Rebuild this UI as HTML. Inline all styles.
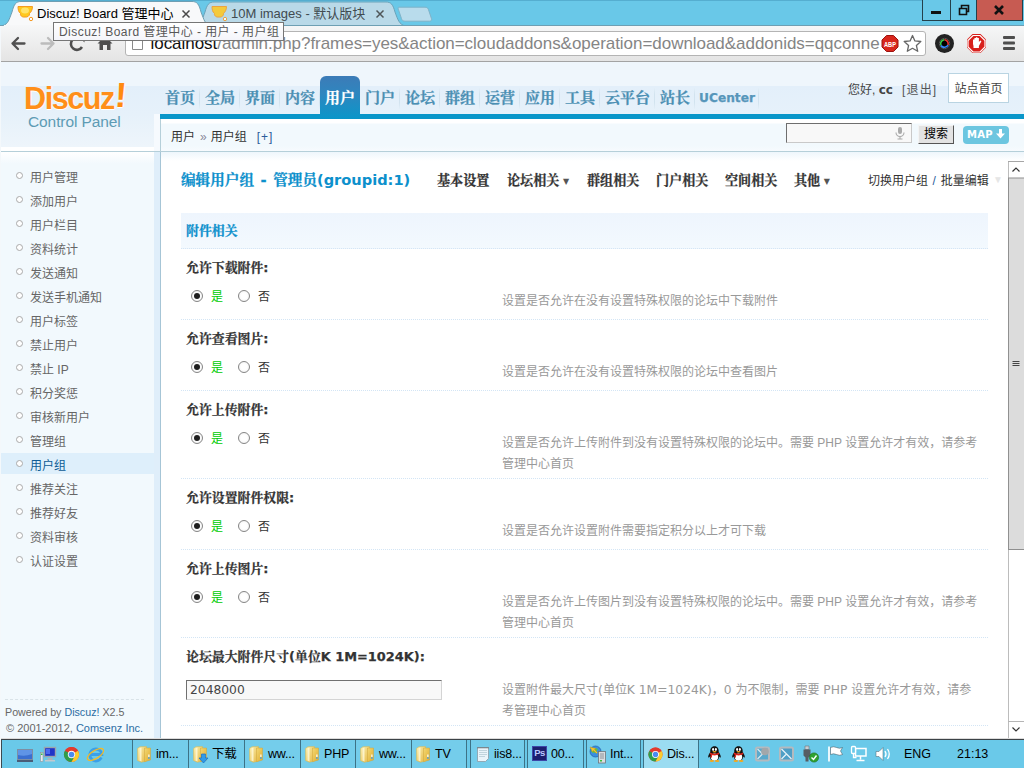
<!DOCTYPE html>
<html lang="zh-CN">
<head>
<meta charset="utf-8">
<title>Discuz! Board 管理中心 - 用户 - 用户组</title>
<style>
html,body{margin:0;padding:0}
body{width:1024px;height:768px;overflow:hidden;position:relative;background:#fff;
 font-family:"DejaVu Sans","Liberation Sans","Noto Sans CJK SC",sans-serif;font-size:12px;color:#555}
*{box-sizing:border-box}
.abs{position:absolute}
.ui{font-family:"Liberation Sans","Noto Sans CJK SC",sans-serif}
.cj{font-family:"Liberation Sans","Noto Sans CJK SC",sans-serif}
.sj{font-family:"DejaVu Sans","Noto Serif CJK SC",serif;-webkit-text-stroke:.25px currentColor}
a{text-decoration:none;color:inherit}

/* ---------- browser chrome ---------- */
#titlebar{left:0;top:0;width:1024px;height:26px;background:#69c8e8}
#toolbar{left:0;top:25px;width:1024px;height:37px;background:linear-gradient(#f6f7f8,#ececec 60%,#e4e4e4);border-bottom:1px solid #a3a3a3}
#urlbar{left:125px;top:31px;width:801px;height:25px;background:#fff;border:1px solid #b4b4b4;border-radius:3px}
#urltext{left:150.500px;top:33px;font-size:17px;line-height:22px;color:#858585;white-space:nowrap;letter-spacing:-.04px}
#urltext b{font-weight:normal;color:#111}
#tooltip{left:53px;top:22px;width:231px;height:19px;background:linear-gradient(#fff,#f4f5fa);border:1px solid #767676;color:#575757;font-size:12px;line-height:18px;padding-left:5px;white-space:nowrap;letter-spacing:.45px}
.tabtitle{top:5px;font-size:13px;line-height:17px;white-space:nowrap}
.wbtn{top:0;height:20px;border:1px solid #2b4f5d;border-top:none}

/* ---------- page ---------- */
#page{left:0;top:62px;width:1024px;height:677px;background:#fff;overflow:hidden}
#hd{left:0;top:0;width:1024px;height:90px;background:linear-gradient(#eff6fc 0,#eff6fc 24px,#e3effa 24px,#e6f1fa 52px,#eef5fb 85px,#fff 85px,#fff 89px,#b5cfd9 89px)}
#navline{left:160px;top:52px;width:864px;height:5px;background:#0996c9}
#crumb{left:160px;top:57px;width:864px;height:33px;background:linear-gradient(#fff 0,#fff 4px,#f2f9fd 5px,#f2f9fd 27px,#f7fbfe 32px);border-bottom:1px solid #b5cfd9;border-left:1px solid #b5cfd9}
.nav a{position:absolute;top:24px;height:28px;line-height:24px;font-size:15px;font-weight:bold;color:#4b8fb3;text-align:center}
.nav a::after{content:"";position:absolute;right:0;top:2px;width:1px;height:21px;background:linear-gradient(#e3eff8,#d2e3ef 30%,#d2e3ef 70%,#e3eff8)}
.nav a.on::after{display:none}
.nav a.on{top:14px;height:43px;line-height:44px;color:#fff;border:none;border-radius:6px 6px 0 0;background:linear-gradient(#3c7bb7,#2f86bf 40%,#0a96c9)}
#side{left:0;top:90px;width:154px;height:587px;background:linear-gradient(#fff,#f2f9fd 12px)}
#sidegap{left:154px;top:90px;width:6px;height:587px;background:#dfeefa}
#mainborder{left:160px;top:90px;width:1px;height:587px;background:#a6c5d6}
.mi{left:0;width:154px;height:21px;font-size:12px;line-height:21px;color:#666}
.mi i{position:absolute;left:16px;top:7px;width:7px;height:7px;border:1px solid #aaa;border-radius:50%;background:#fff}
.mi span{position:absolute;left:30px;top:3px}
.mi.on{background:#deeffb;color:#0d5b95}
#main{left:161px;top:90px;width:863px;height:587px;background:linear-gradient(#eef6fc,#fff 9px)}
h3.t{margin:0;left:20px;top:18px;font-size:14.6px;line-height:20px;color:#0c90cc;font-weight:bold;white-space:nowrap}
.tab{top:21px;font-size:13.100px;line-height:16px;font-weight:bold;color:#333;white-space:nowrap}
#sec{left:20px;top:61px;width:807px;height:36px;background:linear-gradient(#eef5fd,#f3f9fe);border-bottom:1px dotted #d5e6f5;color:#0c90cc;font-weight:bold;font-size:12.900px;line-height:36px;padding-left:5px}
.row{left:20px;width:807px;border-bottom:1px dotted #d3e5f5}
.row .l{position:absolute;left:5px;top:12px;font-weight:bold;color:#333;font-size:12.900px;line-height:14px;white-space:nowrap}
.row .d{position:absolute;left:321px;top:42px;width:486px;color:#999;line-height:21px;font-size:12px}
.rd{position:absolute;top:41px;width:12px;height:12px;border:1px solid #858585;border-radius:50%;background:radial-gradient(#fff 40%,#ececec)}
.rd.c::after{content:"";position:absolute;left:2px;top:2px;width:6px;height:6px;border-radius:50%;background:#1e1e1e}
.rt{position:absolute;top:40px;font-size:12px;line-height:16px;color:#333}
.v{font-family:"DejaVu Sans",sans-serif;font-size:12.300px}
.ar{font-size:8px;position:relative;top:-1.500px;left:3.500px;color:#555;-webkit-text-stroke:0}
#sb{left:1008px;top:99px;width:16px;height:578px;background:#fff;border-left:1px solid #bdbdbd}

/* ---------- taskbar ---------- */
#taskbar{left:0;top:738px;width:1024px;height:30px;background:#6ac9e9;border-top:1px solid #dcdcdc;padding-top:0}
#taskbar::before{content:"";position:absolute;left:0;top:0;width:1024px;height:1px;background:#3c4246}
#taskbar>*{margin-top:1px}
.tb{top:0;height:28px;border-left:1px solid #3d7286;border-right:1px solid #3d7286;font-size:12.5px;letter-spacing:-.2px;line-height:28px;color:#000;white-space:nowrap}
</style>
</head>
<body>

<!-- ================= BROWSER CHROME ================= -->
<div id="titlebar" class="abs"></div>
<div id="toolbar" class="abs"></div>
<svg class="abs" style="left:0;top:0" width="1024" height="26" viewBox="0 0 1024 26">
 <!-- inactive tab -->
 <path d="M195 26 C201 24 202 20 205 12 C207 4.500 209 2 214 2 L386 2 C391 2 393 4.500 395 12 C398 20 399 24 405 26 Z" fill="#b9d9e8" stroke="#6aa3ba" stroke-width="1"/>
 <!-- new tab button -->
 <path transform="translate(0 .7)" d="M399 6.5 L425 6.5 C427 6.5 428 7.5 428.5 9 L431.5 18 C432 19.5 431 20.5 429.5 20.5 L405 20.5 C403 20.5 402 19.5 401.5 18 L398.3 8.5 C398 7.3 398.3 6.5 399 6.5 Z" fill="#b9dcec" stroke="#7fb3c9" stroke-width="1"/>
 <!-- active tab -->
 <path d="M0 26 L0 25.5 L3 25.5 C8 24 9 20 12 12 C14 4 16 1.500 21 1.500 L192 1.500 C197 1.500 199 4 201 12 C204 20 205 24 210 25.5 L1024 25.5 L1024 26 Z" fill="#f8f9fa" stroke="#6f9fb3" stroke-width="1"/>
 <rect x="4" y="25" width="206" height="1" fill="#f6f7f8"/>
 <rect x="0" y="0" width="1024" height="1" fill="#55aed0"/>
 <!-- favicons -->
 <g id="fav1">
  <path d="M18 6.5 L32.5 6.5 C32.5 10 31 12 29.5 13.5 C30 16 27 17.5 25 17 C22 17.5 20 15.5 20.5 13.5 C18.5 12 18 9.5 18 6.5 Z" fill="#ffc81e" stroke="#f59a23" stroke-width="1"/>
  <circle cx="31" cy="19" r="1.7" fill="#fff" stroke="#f59a23" stroke-width="1"/>
  <ellipse cx="25" cy="10.500" rx="4" ry="3" fill="#ffe36a"/>
 </g>
 <g transform="translate(194 0)" opacity=".85">
  <path d="M18 6.5 L32.5 6.5 C32.5 10 31 12 29.5 13.5 C30 16 27 17.5 25 17 C22 17.5 20 15.5 20.5 13.5 C18.5 12 18 9.5 18 6.5 Z" fill="#ffc81e" stroke="#f59a23" stroke-width="1"/>
  <circle cx="31" cy="19" r="1.7" fill="#fff" stroke="#f59a23" stroke-width="1"/>
 </g>
 <!-- tab close crosses -->
 <path d="M182.5 10.500 L189.5 17.500 M189.5 10.500 L182.5 17.500" stroke="#4a4a4a" stroke-width="1.500"/>
 <path d="M376.5 10.500 L383.5 17.500 M383.5 10.500 L376.5 17.500" stroke="#4f5558" stroke-width="1.500"/>
 <!-- window buttons -->
 <rect x="922.5" y="-1" width="28" height="21.500" fill="#69c8e8" stroke="#24404b"/>
 <rect x="950.5" y="-1" width="26" height="21.500" fill="#69c8e8" stroke="#24404b"/>
 <rect x="976.5" y="-1" width="46" height="21.500" fill="#c75b52" stroke="#24404b"/>
 <rect x="931" y="11" width="10" height="3" fill="#111"/>
 <path d="M959.5 8.5 h7 v6 h-7 z M961.5 8 v-2.5 h7 v6 h-2" fill="none" stroke="#111" stroke-width="1.6"/>
 <path d="M995 6 L1003 14 M1003 6 L995 14" stroke="#111" stroke-width="2.6"/>
</svg>
<div class="abs tabtitle ui" style="left:37px;color:#000">Discuz! Board 管理中心</div>
<div class="abs tabtitle ui" style="left:231px;color:#414b50">10M images - 默认版块</div>
<div id="urlbar" class="abs"></div>
<svg class="abs" style="left:0;top:26px" width="1024" height="35" viewBox="0 26 1024 35">
 <!-- back -->
 <path d="M12.500 43.500 L24.500 43.500 M18 38 L12.500 43.500 L18 49" fill="none" stroke="#505050" stroke-width="2.300" stroke-linecap="round" stroke-linejoin="round"/>
 <!-- forward -->
 <path d="M41.500 43.500 L53.500 43.500 M48 38 L53.500 43.500 L48 49" fill="none" stroke="#bcbcbc" stroke-width="2.300" stroke-linecap="round" stroke-linejoin="round"/>
 <!-- reload -->
 <path d="M81.5 40 A6 6 0 1 0 82 47" fill="none" stroke="#4e4e4e" stroke-width="2.6"/>
 <path d="M78 36 L84.5 36 L84.5 42.5 Z" fill="#4e4e4e"/>
 <!-- home -->
 <path d="M97.5 43.5 L105 36 L112.5 43.5 L110.5 43.5 L110.5 50 L107 50 L107 45 L103 45 L103 50 L99.5 50 L99.5 43.5 Z" fill="#4e4e4e"/>
 <!-- page icon -->
 <path d="M132.5 37.5 h7 l3 3 v9 h-10 z" fill="#fff" stroke="#8a8a8a"/>
 <!-- ABP -->
 <path d="M886.5 35.5 h7 l4.5 4.5 v7 l-4.5 4.5 h-7 l-4.5 -4.5 v-7 z" fill="#d8261c" stroke="#9c1410" stroke-width="1"/>
 <text x="890" y="46.5" font-family="Liberation Sans, sans-serif" font-size="7" font-weight="bold" fill="#fff" text-anchor="middle" textLength="12" lengthAdjust="spacingAndGlyphs">ABP</text>
 <!-- star -->
 <path d="M912.5 35.5 l2.4 5.4 5.9 .6 -4.4 4 1.3 5.8 -5.2 -3 -5.2 3 1.3 -5.8 -4.4 -4 5.9 -.6 z" fill="#fff" stroke="#666" stroke-width="1.3" stroke-linejoin="round"/>
 <!-- camera/colour icon -->
 <circle cx="944.5" cy="43.5" r="9.5" fill="#222"/>
 <circle cx="944.5" cy="43.5" r="5.2" fill="#000" stroke="#555" stroke-width="1"/>
 <path d="M941 45.5 A4 4 0 0 1 944.5 39.8" fill="none" stroke="#3bd14c" stroke-width="1.6"/>
 <path d="M944.5 39.8 A4 4 0 0 1 948 45" fill="none" stroke="#e33" stroke-width="1.6"/>
 <path d="M948 45 A4 4 0 0 1 941 45.5" fill="none" stroke="#38f" stroke-width="1.6"/>
 <!-- stop hand -->
 <path d="M972.5 34 h8 l5.5 5.5 v8 l-5.5 5.5 h-8 l-5.500 -5.500 v-8 z" fill="#d8201c" stroke="#fff" stroke-width="0"/>
 <path d="M973 35.500 h7 l5 5 v6.500 l-5 5 h-7 l-5 -5 v-6.500 z" fill="none" stroke="#fff" stroke-width="1.2"/>
 <path d="M973 44 v-4.500 h1.400 v-1.500 h1.500 v-.8 h1.500 v.8 h1.500 v4 l1.300 -1.500 l1.200 .8 l-2.500 4.700 v2 h-5.400 v-2 z" fill="#fff"/>
 <!-- menu -->
 <rect x="1003" y="36" width="12" height="3" rx="1" fill="#4e4e4e"/>
 <rect x="1003" y="41.500" width="12" height="3" rx="1" fill="#4e4e4e"/>
 <rect x="1003" y="47" width="12" height="3" rx="1" fill="#4e4e4e"/>
</svg>
<div id="urltext" class="abs ui"><b>localhost</b>/admin.php?frames=yes&amp;action=cloudaddons&amp;operation=download&amp;addonids=qqconne</div>
<div id="tooltip" class="abs ui">Discuz! Board 管理中心 - 用户 - 用户组</div>

<!-- ================= PAGE ================= -->
<div id="page" class="abs">
 <div id="hd" class="abs"></div>
 <div id="navline" class="abs"></div>
 <div id="crumb" class="abs"></div>
 <div id="logo" class="abs ui" style="left:24px;top:19px;width:110px;height:32px;font-size:30.500px;line-height:32px;font-weight:bold;color:#ff8f1a;letter-spacing:-1.400px;white-space:nowrap;text-shadow:0 1px 0 #fff,1px 0 0 #fff8ee">Discuz<span style="display:inline-block;font-size:35px;position:relative;top:-2px;left:1.500px;transform:skewX(-4deg);color:#ff8a10">!</span></div>
 <div id="logo2" class="abs ui" style="left:28px;top:51px;font-size:15.500px;line-height:18px;color:#5d9bb4;white-space:nowrap;letter-spacing:-.1px">Control Panel</div>
 <div class="nav sj">
  <a style="left:160px;width:40px">首页</a>
  <a style="left:200px;width:40px">全局</a>
  <a style="left:240px;width:40px">界面</a>
  <a style="left:280px;width:40px">内容</a>
  <a class="on" style="left:320px;width:40px">用户</a>
  <a style="left:360px;width:40px">门户</a>
  <a style="left:400px;width:40px">论坛</a>
  <a style="left:440px;width:40px">群组</a>
  <a style="left:480px;width:40px">运营</a>
  <a style="left:520px;width:40px">应用</a>
  <a style="left:560px;width:40px">工具</a>
  <a style="left:600px;width:55px">云平台</a>
  <a style="left:655px;width:40px">站长</a>
  <a style="left:695px;width:64px;font-family:'DejaVu Sans',sans-serif;font-size:12.200px;color:#5696ba">UCenter</a>
 </div>
 <div class="abs cj" style="left:848px;top:20px;font-size:12px;line-height:16px;color:#444;white-space:nowrap">您好, <b style="font-family:'DejaVu Sans',sans-serif;color:#444">cc</b><span style="color:#555;padding-left:9px;letter-spacing:1.200px">[退出]</span></div>
 <div class="abs cj" style="left:948px;top:11px;width:61px;height:30px;background:#fff;border:1px solid #b9d4e2;font-size:12px;line-height:30px;text-align:center;color:#444">站点首页</div>
 <div class="abs cj" style="left:171px;top:67px;font-size:12px;line-height:16px;color:#333;white-space:nowrap">用户<span style="color:#889;padding:0 4px 0 5px">»</span>用户组<span style="color:#2b5c9a;padding-left:10px;letter-spacing:1px">[+]</span></div>
 <div class="abs" style="left:786px;top:61px;width:126px;height:20px;background:#f8f8f8;border:1px solid #c9c9c9;border-top-color:#6e6e6e;border-left-color:#6e6e6e"></div>
 <svg class="abs" style="left:894px;top:64px" width="12" height="14" viewBox="0 0 12 14"><rect x="4" y="1" width="4" height="7" rx="2" fill="#aaa"/><path d="M2 6.500 a4 4 0 0 0 8 0 M6 10.500 v2.500 M3.500 13 h5" fill="none" stroke="#aaa" stroke-width="1.100"/></svg>
 <div class="abs cj" style="left:918px;top:63px;width:36px;height:19px;background:#e3e3e3;border:1px solid #f4f4f4;border-right-color:#555;border-bottom-color:#555;font-size:12px;line-height:17px;text-align:center;color:#000">搜索</div>
 <div class="abs" style="left:963px;top:64px;width:46px;height:18px;background:#6cc6e0;border-radius:4px;color:#fff;font:bold 10px/18px 'DejaVu Sans',sans-serif;text-align:center;letter-spacing:.3px">MAP<svg width="9" height="10" viewBox="0 0 9 10" style="margin-left:3px;vertical-align:-1px"><path d="M3 0 h3 v4.500 h3 l-4.500 5 l-4.500 -5 h3z" fill="#fff"/></svg></div>
 <div class="abs" style="left:154px;top:52px;width:6px;height:37px;background:#f6fafe"></div>
 <div id="side" class="abs cj">
  <div class="mi abs" style="top:13px"><i></i><span>用户管理</span></div>
  <div class="mi abs" style="top:37px"><i></i><span>添加用户</span></div>
  <div class="mi abs" style="top:61px"><i></i><span>用户栏目</span></div>
  <div class="mi abs" style="top:85px"><i></i><span>资料统计</span></div>
  <div class="mi abs" style="top:109px"><i></i><span>发送通知</span></div>
  <div class="mi abs" style="top:133px"><i></i><span>发送手机通知</span></div>
  <div class="mi abs" style="top:157px"><i></i><span>用户标签</span></div>
  <div class="mi abs" style="top:181px"><i></i><span>禁止用户</span></div>
  <div class="mi abs" style="top:205px"><i></i><span>禁止 IP</span></div>
  <div class="mi abs" style="top:229px"><i></i><span>积分奖惩</span></div>
  <div class="mi abs" style="top:253px"><i></i><span>审核新用户</span></div>
  <div class="mi abs" style="top:277px"><i></i><span>管理组</span></div>
  <div class="mi abs on" style="top:301px"><i></i><span>用户组</span></div>
  <div class="mi abs" style="top:325px"><i></i><span>推荐关注</span></div>
  <div class="mi abs" style="top:349px"><i></i><span>推荐好友</span></div>
  <div class="mi abs" style="top:373px"><i></i><span>资料审核</span></div>
  <div class="mi abs" style="top:397px"><i></i><span>认证设置</span></div>
  <div class="abs" style="left:5px;top:547px;width:139px;height:0;border-top:1px dashed #d9e3e8"></div>
  <div class="abs ui" style="left:5px;top:553px;font-size:10.700px;line-height:15px;color:#666;white-space:nowrap">Powered by <span style="color:#2b6ca3">Discuz!</span> X2.5</div>
  <div class="abs ui" style="left:6px;top:569px;font-size:11px;line-height:15px;color:#666;white-space:nowrap">© 2001-2012, <span style="color:#2b6ca3">Comsenz Inc.</span></div>
 </div>
 <div id="sidegap" class="abs"></div>
 <div id="main" class="abs">
  <h3 class="t abs sj">编辑用户组<span style="padding:0 1.500px"> - </span>管理员<span style="font-family:'DejaVu Sans',sans-serif;font-size:14.600px;-webkit-text-stroke:0">(groupid:1)</span></h3>
  <div class="tab abs sj" style="left:276px">基本设置</div>
  <div class="tab abs sj" style="left:346px">论坛相关<span class="ar">▼</span></div>
  <div class="tab abs sj" style="left:426px">群组相关</div>
  <div class="tab abs sj" style="left:495px">门户相关</div>
  <div class="tab abs sj" style="left:564px">空间相关</div>
  <div class="tab abs sj" style="left:633px">其他<span class="ar">▼</span></div>
  <div class="abs cj" style="left:707px;top:21px;font-size:12px;line-height:16px;color:#333;white-space:nowrap">切换用户组<span style="color:#2b5c9a;padding:0 5px 0 4.500px">/</span>批量编辑<span style="color:#e6e6e6;font-size:10px;position:relative;top:-2px;left:4px">▼</span></div>
  <div id="sec" class="abs sj">附件相关</div>
  <div class="row abs" style="top:97px;height:71px"><span class="l sj">允许下载附件:</span><i class="rd c" style="left:10px"></i><span class="rt" style="left:30px;color:#0c0">是</span><i class="rd" style="left:57px"></i><span class="rt" style="left:77px">否</span><span class="d cj">设置是否允许在没有设置特殊权限的论坛中下载附件</span></div>
  <div class="row abs" style="top:168px;height:71px"><span class="l sj">允许查看图片:</span><i class="rd c" style="left:10px"></i><span class="rt" style="left:30px;color:#0c0">是</span><i class="rd" style="left:57px"></i><span class="rt" style="left:77px">否</span><span class="d cj">设置是否允许在没有设置特殊权限的论坛中查看图片</span></div>
  <div class="row abs" style="top:239px;height:88px"><span class="l sj">允许上传附件:</span><i class="rd c" style="left:10px"></i><span class="rt" style="left:30px;color:#0c0">是</span><i class="rd" style="left:57px"></i><span class="rt" style="left:77px">否</span><span class="d cj">设置是否允许上传附件到没有设置特殊权限的论坛中。需要 PHP 设置允许才有效，请参考管理中心首页</span></div>
  <div class="row abs" style="top:327px;height:71px"><span class="l sj">允许设置附件权限:</span><i class="rd c" style="left:10px"></i><span class="rt" style="left:30px;color:#0c0">是</span><i class="rd" style="left:57px"></i><span class="rt" style="left:77px">否</span><span class="d cj">设置是否允许设置附件需要指定积分以上才可下载</span></div>
  <div class="row abs" style="top:398px;height:88px"><span class="l sj">允许上传图片:</span><i class="rd c" style="left:10px"></i><span class="rt" style="left:30px;color:#0c0">是</span><i class="rd" style="left:57px"></i><span class="rt" style="left:77px">否</span><span class="d cj">设置是否允许上传图片到没有设置特殊权限的论坛中。需要 PHP 设置允许才有效，请参考管理中心首页</span></div>
  <div class="row abs" style="top:486px;height:88px"><span class="l sj">论坛最大附件尺寸(单位K 1M=1024K):</span><div class="abs" style="left:5px;top:42px;width:256px;height:20px;background:#f8f8f8;border:1px solid #d4d4d4;border-top-color:#707070;border-left-color:#707070;font:12.300px/18px 'DejaVu Sans',sans-serif;color:#444;padding-left:3px">2048000</div><span class="d cj">设置附件最大尺寸<span class="v">(单位K 1M=1024K)</span>，<span class="v">0 </span>为不限制，需要<span class="v"> PHP </span>设置允许才有效，请参<br>考管理中心首页</span></div>
 </div>
 <div id="mainborder" class="abs"></div>
 <div id="sb" class="abs">
  <svg class="abs" style="left:-1px;top:0" width="16" height="578" viewBox="0 0 16 578">
   <rect x="0" y="0" width="16" height="578" fill="#fff"/>
   <path d="M0.500 0 V578" stroke="#bcbcbc"/>
   <rect x="0" y="17" width="16" height="371" fill="#dcdcdc"/>
   <path d="M0 0.500 H16" stroke="#a6a6a6"/>
   <path d="M0 17 H16 M0 388.500 H16" stroke="#8f8f8f" stroke-width="1"/>
   <path d="M0.500 17 V389" stroke="#909090" stroke-width="1"/>
   <path d="M0 560.500 H16" stroke="#b5b5b5"/>
   <path d="M4.500 10.500 L8 7 L11.500 10.500" fill="none" stroke="#333" stroke-width="1.200"/>
   <path d="M4.500 566.500 L8 570 L11.500 566.500" fill="none" stroke="#333" stroke-width="1.200"/>
   <path d="M4.500 200.500 h7 M4.500 202.500 h7 M4.500 204.500 h7" stroke="#444" stroke-width="1"/>
  </svg>
 </div>
</div>

<!-- ================= TASKBAR ================= -->
<div class="abs" style="left:0;top:26px;width:1px;height:742px;background:#f4f8fb;z-index:5"></div>
<div class="abs" style="left:1px;top:739px;width:1px;height:29px;background:#3c4a50;z-index:5"></div>
<div id="taskbar" class="abs ui">
 <svg width="0" height="0" style="position:absolute">
  <linearGradient id="fg" x1="0" y1="0" x2="1" y2="1"><stop offset="0" stop-color="#fbefb0"/><stop offset="1" stop-color="#e6b944"/></linearGradient>
  <linearGradient id="fg2" x1="0" y1="0" x2="1" y2="1"><stop offset="0" stop-color="#f3d873"/><stop offset="1" stop-color="#e0ad32"/></linearGradient>
 </svg>
 <!-- quick launch -->
 <svg class="abs" style="left:16px;top:5px" width="90" height="20" viewBox="0 0 90 20">
  <rect x="1.500" y="4.500" width="15" height="10" fill="#3a6fd0" stroke="#7d8ea3" stroke-width="1"/><path d="M2 5 h14 v4 q-7 3 -14 1z" fill="#5f94e6"/><rect x="1" y="15" width="16" height="2" fill="#4a5d78"/>
  <rect x="28.500" y="2.500" width="11" height="9" fill="#1f35c8" stroke="#9aa4ad" stroke-width="1.400"/><path d="M30 4 h4 v5 h-4z" fill="#4b6af0"/><rect x="31.500" y="13" width="5" height="2" fill="#aab3bb"/><rect x="29" y="15" width="10" height="1.500" fill="#c2c9cf"/><rect x="24.500" y="7.500" width="2.500" height="9" fill="#e8ecef" stroke="#8c959c" stroke-width=".6"/><rect x="25" y="8.500" width="1.500" height="1.500" fill="#3bbf3b"/>
  <g transform="translate(47.500 1.500) scale(.94)"><g><circle cx="8.500" cy="8.500" r="8" fill="#e33b2e"/><path d="M8.500 8.500 L1.570 4.500 A8 8 0 0 0 8.500 16.500 L12 10.500 Z" fill="#2f9e4b"/><path d="M8.500 8.500 L15.430 4.500 A8 8 0 0 1 8.500 16.500 L11.960 10.500 Z" fill="#fbcb2e"/><path d="M1.570 4.500 A8 8 0 0 1 15.430 4.500 L8.500 4.500 Z" fill="#e33b2e"/><circle cx="8.500" cy="8.500" r="3.900" fill="#fff"/><circle cx="8.500" cy="8.500" r="3" fill="#4a8bf0"/></g></g>
  <g transform="translate(70 0)"><path d="M15.300 12.500 a6 6 0 1 1 .5 -3 h-11.500" fill="none" stroke="#3aa0ea" stroke-width="2.800"/><ellipse cx="9.500" cy="9.500" rx="9.300" ry="4" fill="none" stroke="#f0b92a" stroke-width="1.300" transform="rotate(-32 9.500 9.500)"/></g>
 </svg>
 <div class="tb abs" style="left:132px;width:57px;background:#74cdeb"><svg class="abs" style="left:4px;top:6px" width="16" height="17" viewBox="0 0 16 17"><g><path d="M.5 2.500 L3 .700 L9.500 .500 L9.500 15 L4.500 16.300 L.5 14.500 Z" fill="url(#fg)" stroke="#d9b64e" stroke-width=".5"/><path d="M2.500 2.200 L4.500 1.600 L4.500 15.500 L2.500 14.600 Z" fill="#fffbe0" opacity=".75"/><path d="M7.500 2 L13.500 2 L13.500 14 L7.500 15.700 Z" fill="url(#fg2)" stroke="#cfa43a" stroke-width=".5"/><rect x="11.300" y="8.500" width="1.200" height="2.500" fill="#fff"/><rect x="11.300" y="11" width="1.200" height="2" fill="#3f9fe8"/></g></svg><span class="abs" style="left:23px;top:0">im...</span></div>
 <div class="tb abs" style="left:188px;width:57px;background:#74cdeb"><svg class="abs" style="left:4px;top:6px" width="18" height="18" viewBox="0 0 18 18"><g><path d="M.5 2.500 L3 .700 L9.500 .500 L9.500 15 L4.500 16.300 L.5 14.500 Z" fill="url(#fg)" stroke="#d9b64e" stroke-width=".5"/><path d="M2.500 2.200 L4.500 1.600 L4.500 15.500 L2.500 14.600 Z" fill="#fffbe0" opacity=".75"/><path d="M7.500 2 L13.500 2 L13.500 14 L7.500 15.700 Z" fill="url(#fg2)" stroke="#cfa43a" stroke-width=".5"/><rect x="11.300" y="8.500" width="1.200" height="2.500" fill="#fff"/><rect x="11.300" y="11" width="1.200" height="2" fill="#3f9fe8"/></g><path d="M8.500 8 h4 v4 h2.500 l-4.500 5 l-4.500 -5 h2.500 z" fill="#2f9be8" stroke="#1a6fc0" stroke-width=".7"/></svg><span class="abs" style="left:23px;top:0">下载</span></div>
 <div class="tb abs" style="left:244px;width:57px;background:#74cdeb"><svg class="abs" style="left:4px;top:6px" width="16" height="17" viewBox="0 0 16 17"><g><path d="M.5 2.500 L3 .700 L9.500 .500 L9.500 15 L4.500 16.300 L.5 14.500 Z" fill="url(#fg)" stroke="#d9b64e" stroke-width=".5"/><path d="M2.500 2.200 L4.500 1.600 L4.500 15.500 L2.500 14.600 Z" fill="#fffbe0" opacity=".75"/><path d="M7.500 2 L13.500 2 L13.500 14 L7.500 15.700 Z" fill="url(#fg2)" stroke="#cfa43a" stroke-width=".5"/><rect x="11.300" y="8.500" width="1.200" height="2.500" fill="#fff"/><rect x="11.300" y="11" width="1.200" height="2" fill="#3f9fe8"/></g></svg><span class="abs" style="left:23px;top:0">ww...</span></div>
 <div class="tb abs" style="left:300px;width:56px;background:#74cdeb"><svg class="abs" style="left:4px;top:6px" width="16" height="17" viewBox="0 0 16 17"><g><path d="M.5 2.500 L3 .700 L9.500 .500 L9.500 15 L4.500 16.300 L.5 14.500 Z" fill="url(#fg)" stroke="#d9b64e" stroke-width=".5"/><path d="M2.500 2.200 L4.500 1.600 L4.500 15.500 L2.500 14.600 Z" fill="#fffbe0" opacity=".75"/><path d="M7.500 2 L13.500 2 L13.500 14 L7.500 15.700 Z" fill="url(#fg2)" stroke="#cfa43a" stroke-width=".5"/><rect x="11.300" y="8.500" width="1.200" height="2.500" fill="#fff"/><rect x="11.300" y="11" width="1.200" height="2" fill="#3f9fe8"/></g></svg><span class="abs" style="left:23px;top:0">PHP</span></div>
 <div class="tb abs" style="left:355px;width:57px;background:#74cdeb"><svg class="abs" style="left:4px;top:6px" width="16" height="17" viewBox="0 0 16 17"><g><path d="M.5 2.500 L3 .700 L9.500 .500 L9.500 15 L4.500 16.300 L.5 14.500 Z" fill="url(#fg)" stroke="#d9b64e" stroke-width=".5"/><path d="M2.500 2.200 L4.500 1.600 L4.500 15.500 L2.500 14.600 Z" fill="#fffbe0" opacity=".75"/><path d="M7.500 2 L13.500 2 L13.500 14 L7.500 15.700 Z" fill="url(#fg2)" stroke="#cfa43a" stroke-width=".5"/><rect x="11.300" y="8.500" width="1.200" height="2.500" fill="#fff"/><rect x="11.300" y="11" width="1.200" height="2" fill="#3f9fe8"/></g></svg><span class="abs" style="left:23px;top:0">ww...</span></div>
 <div class="tb abs" style="left:411px;width:56px;background:#74cdeb"><svg class="abs" style="left:4px;top:6px" width="16" height="17" viewBox="0 0 16 17"><g><path d="M.5 2.500 L3 .700 L9.500 .500 L9.500 15 L4.500 16.300 L.5 14.500 Z" fill="url(#fg)" stroke="#d9b64e" stroke-width=".5"/><path d="M2.500 2.200 L4.500 1.600 L4.500 15.500 L2.500 14.600 Z" fill="#fffbe0" opacity=".75"/><path d="M7.500 2 L13.500 2 L13.500 14 L7.500 15.700 Z" fill="url(#fg2)" stroke="#cfa43a" stroke-width=".5"/><rect x="11.300" y="8.500" width="1.200" height="2.500" fill="#fff"/><rect x="11.300" y="11" width="1.200" height="2" fill="#3f9fe8"/></g></svg><span class="abs" style="left:23px;top:0">TV</span></div>
 <div class="tb abs" style="left:470px;width:55px;background:#74cdeb"><svg class="abs" style="left:4px;top:5px" width="16" height="18" viewBox="0 0 16 18"><path d="M2.500 2.500 h11 v11 l-3 3 h-8 z" fill="#eaf4fa" stroke="#8a9aa5" stroke-width=".8"/><path d="M4 5.500 h8 M4 7.500 h8 M4 9.500 h8 M4 11.500 h6" stroke="#b6cbd6" stroke-width=".8"/><path d="M3 2 v1.500 M5 2 v1.500 M7 2 v1.500 M9 2 v1.500 M11 2 v1.500 M13 2 v1.500" stroke="#555" stroke-width=".8"/></svg><span class="abs" style="left:23px;top:0">iis8...</span></div>
 <div class="tb abs" style="left:527px;width:57px;background:#74cdeb"><div class="abs" style="left:4px;top:6px;width:15px;height:15px;background:#1b1f6e;border:1px solid #3d46a8;color:#b9c7ff;font:bold 9.500px/12px 'Liberation Sans',sans-serif;text-align:center;letter-spacing:-.5px">Ps</div><span class="abs" style="left:23px;top:0">00...</span></div>
 <div class="tb abs" style="left:586px;width:55px;background:#74cdeb"><svg class="abs" style="left:2px;top:5px" width="18" height="19" viewBox="0 0 18 19"><circle cx="6.500" cy="6.500" r="5.500" fill="#3b8fe0" stroke="#1e5fae" stroke-width=".7"/><path d="M2 6 q3 -4 7 -2 q-1 3 -4 4 q-2 0 -3 -2z" fill="#5dc24a"/><path d="M1 2 l6 1.500 l-1.500 1 l3 3 l-1 1 l-3 -3 l-1 1.500 z" fill="#f5c52e" stroke="#b98a12" stroke-width=".4"/><rect x="9.500" y="6.500" width="7" height="11.500" fill="#d9dcdf" stroke="#6e757b" stroke-width=".8"/><path d="M11 9 h4 M11 11 h4 M11 13 h4" stroke="#7a8288" stroke-width=".8"/><rect x="11" y="15" width="2" height="1.500" fill="#3bbf3b"/></svg><span class="abs" style="left:23px;top:0">Int...</span></div>
 <div class="tb abs" style="left:643px;width:56px;background:#9bdcf1"><svg class="abs" style="left:4px;top:7px" width="15" height="15" viewBox="0 0 17 17"><g><circle cx="8.500" cy="8.500" r="8" fill="#e33b2e"/><path d="M8.500 8.500 L1.570 4.500 A8 8 0 0 0 8.500 16.500 L12 10.500 Z" fill="#2f9e4b"/><path d="M8.500 8.500 L15.430 4.500 A8 8 0 0 1 8.500 16.500 L11.960 10.500 Z" fill="#fbcb2e"/><path d="M1.570 4.500 A8 8 0 0 1 15.430 4.500 L8.500 4.500 Z" fill="#e33b2e"/><circle cx="8.500" cy="8.500" r="3.900" fill="#fff"/><circle cx="8.500" cy="8.500" r="3" fill="#4a8bf0"/></g></svg><span class="abs" style="left:23px;top:0">Dis...</span></div>
 <!-- tray -->
 <svg class="abs" style="left:704px;top:5px" width="192" height="20" viewBox="704 745 192 20">
  <g transform="translate(706.500 745.500)"><g><path d="M8 .8 C4.800 .8 3.600 3.500 3.800 6.500 C2.500 8.500 1.300 10.500 1.800 12 C2.300 12.300 3 11.500 3.300 11 C3.500 13 4.500 14.300 5 14.800 L11 14.800 C11.500 14.300 12.500 13 12.700 11 C13 11.500 13.700 12.300 14.200 12 C14.700 10.500 13.500 8.500 12.200 6.500 C12.400 3.500 11.200 .8 8 .8 Z" fill="#111"/><ellipse cx="8" cy="11.500" rx="3.700" ry="3.600" fill="#fff"/><path d="M3.600 7 Q8 9.500 12.400 7 L12.800 8.800 Q8 11 3.200 8.800 Z" fill="#e0251b"/><path d="M4.500 8.800 l1.300 .5 l-.5 3 l-1.400 -.5 z" fill="#e0251b"/><ellipse cx="6.600" cy="4" rx="1" ry="1.400" fill="#fff"/><ellipse cx="9.400" cy="4" rx="1" ry="1.400" fill="#fff"/><ellipse cx="8" cy="6.200" rx="2" ry=".8" fill="#f5a81c"/><ellipse cx="5.300" cy="15.400" rx="2.300" ry="1" fill="#f5a81c"/><ellipse cx="10.700" cy="15.400" rx="2.300" ry="1" fill="#f5a81c"/></g></g>
  <g transform="translate(730.500 745.500)"><g><path d="M8 .8 C4.800 .8 3.600 3.500 3.800 6.500 C2.500 8.500 1.300 10.500 1.800 12 C2.300 12.300 3 11.500 3.300 11 C3.500 13 4.500 14.300 5 14.800 L11 14.800 C11.500 14.300 12.500 13 12.700 11 C13 11.500 13.700 12.300 14.200 12 C14.700 10.500 13.500 8.500 12.200 6.500 C12.400 3.500 11.200 .8 8 .8 Z" fill="#111"/><ellipse cx="8" cy="11.500" rx="3.700" ry="3.600" fill="#fff"/><path d="M3.600 7 Q8 9.500 12.400 7 L12.800 8.800 Q8 11 3.200 8.800 Z" fill="#e0251b"/><path d="M4.500 8.800 l1.300 .5 l-.5 3 l-1.400 -.5 z" fill="#e0251b"/><ellipse cx="6.600" cy="4" rx="1" ry="1.400" fill="#fff"/><ellipse cx="9.400" cy="4" rx="1" ry="1.400" fill="#fff"/><ellipse cx="8" cy="6.200" rx="2" ry=".8" fill="#f5a81c"/><ellipse cx="5.300" cy="15.400" rx="2.300" ry="1" fill="#f5a81c"/><ellipse cx="10.700" cy="15.400" rx="2.300" ry="1" fill="#f5a81c"/></g></g>
  <rect x="756" y="747.500" width="13" height="13" rx="1.500" fill="#5aa9cc" stroke="#b3babf" stroke-width="2"/><path d="M757.500 749 l5 5 l-5 5" fill="none" stroke="#d7eaf3" stroke-width="1.200"/><circle cx="765" cy="751.500" r="3.800" fill="#a3a7aa"/>
  <rect x="780" y="747.500" width="13" height="13" rx="1.500" fill="#4f9fc6" stroke="#b3babf" stroke-width="2"/><path d="M781.500 749 L791.500 759 M781.500 759 L786.500 754" fill="none" stroke="#e4f1f7" stroke-width="1.300"/>
  <path d="M805 746 h4 v3.500 h-4z" fill="#c9ced2" stroke="#6b7278" stroke-width=".6"/><path d="M803.500 749.500 h7 v6 l-2 2 v4 h-3 v-4 l-2 -2z" fill="#565d63"/><circle cx="814" cy="757.500" r="4.600" fill="#2fa22f" stroke="#1b6f1b" stroke-width=".6"/><path d="M811.500 757.500 l2 2 l3 -4" fill="none" stroke="#fff" stroke-width="1.400"/>
  <path d="M829 746.500 v15" stroke="#fff" stroke-width="1.700"/><path d="M830.500 747.500 q3 -1.500 6 0 t6 0 l-2 3.500 l2 3.500 q-3 1.500 -6 0 t-6 0z" fill="#fff" stroke="#3c4a52" stroke-width=".5"/>
  <rect x="855.500" y="748.500" width="10.500" height="7.500" fill="none" stroke="#fff" stroke-width="1.500"/><path d="M860.500 756 v3.500 M856.500 760.500 h8" stroke="#fff" stroke-width="1.500"/><rect x="851.500" y="746.500" width="4" height="7" rx="1" fill="#6ac9e9" stroke="#fff" stroke-width="1.300"/><path d="M853.500 753.500 v4 h3" fill="none" stroke="#fff" stroke-width="1.300"/>
  <path d="M876 751.500 h3 l4 -4 v13 l-4 -4 h-3z" fill="#fff" stroke="#47606c" stroke-width=".5"/><path d="M885 751 q2 3 0 6 M887.500 749 q3.500 5 0 10" fill="none" stroke="#fff" stroke-width="1.300"/>
 </svg>
 <div class="abs" style="left:904px;top:0;font-size:12.5px;line-height:28px;color:#000">ENG</div>
 <div class="abs" style="left:957px;top:0;font-size:12.5px;line-height:28px;color:#000">21:13</div>
</div>

</body>
</html>
